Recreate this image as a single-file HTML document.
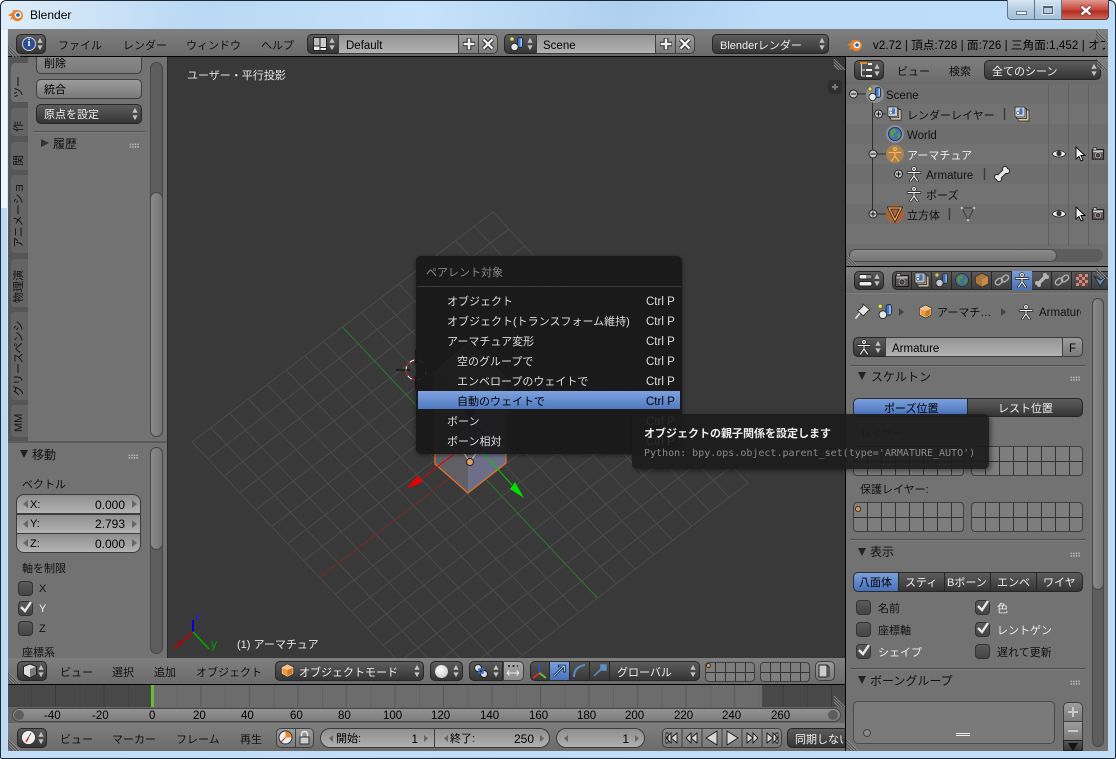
<!DOCTYPE html>
<html><head><meta charset="utf-8"><title>Blender</title>
<style>
html,body{margin:0;padding:0;background:#fff;width:1116px;height:759px;overflow:hidden}
body{position:relative;font-family:"Liberation Sans","Noto Sans CJK JP",sans-serif;font-size:11px;color:#111}
div,svg{position:absolute;box-sizing:border-box}
svg{overflow:visible}
.t{white-space:nowrap;line-height:16px;height:16px;margin-top:1px}
.w{color:#eee}.k{color:#000}
.lat{font-size:11.5px}
.hd{background:linear-gradient(#7f7f7f,#6b6b6b)}
.dk{background:linear-gradient(#5c5c5c,#353535);border:1px solid #262626;border-radius:5px}
.gr{background:linear-gradient(#9c9c9c,#7a7a7a);border:1px solid #3f3f3f;border-radius:5px}
.fd{background:linear-gradient(#949494,#b2b2b2);border:1px solid #3c3c3c}
.bu{background:linear-gradient(#7c9fdc,#4670b8);border:1px solid #2c2c2c}
.bd{background:linear-gradient(#555,#383838);border:1px solid #262626}
.tab{background:#646464;border-radius:4px 0 0 4px;left:11px;width:17px}
.rot{transform-origin:0 0;transform:rotate(-90deg);white-space:nowrap;line-height:15px;height:15px}
.cb{width:15px;height:15px;border-radius:4px;border:1px solid #333;background:linear-gradient(#5a5a5a,#444)}
.trk{background:#5d5d5d;border:1px solid #474747;border-radius:7px}
.th{background:linear-gradient(90deg,#8a8a8a,#757575);border:1px solid #474747;border-radius:7px}
.sep{height:1px;background:#4f4f4f;box-shadow:0 1px 0 #7e7e7e}
.lay{border:1px solid #3f3f3f;border-radius:4px;background-color:#7d7d7d;background-image:linear-gradient(#333,#333),repeating-linear-gradient(90deg,transparent 0 13px,#333 13px 14px);background-size:100% 1px,100% 100%;background-position:0 50%,0 0;background-repeat:no-repeat}
.tri{width:0;height:0;border-left:4px solid transparent;border-right:4px solid transparent;border-top:8px solid #222}
.dots{width:10px;height:5px;background-image:radial-gradient(#bbb 40%,transparent 50%);background-size:2.6px 2.6px}
</style></head><body>
<svg width="0" height="0" style="position:absolute">
<defs>
<symbol id="ud" viewBox="0 0 8 16"><path d="M4 1 7 6.5H1z" fill="#c4c4c4"/><path d="M4 15 7 9.5H1z" fill="#c4c4c4"/></symbol>
<symbol id="man" viewBox="0 0 16 16"><g fill="none" stroke-linecap="round"><g stroke="#222" stroke-width="2.6"><circle cx="8" cy="3" r="1.4"/><path d="M2 6.5H14M8 6.5V10L4.5 15M8 10 11.5 15"/></g><g stroke="#f2f2f2" stroke-width="1.1"><circle cx="8" cy="3" r="1.4"/><path d="M2 6.5H14M8 6.5V10L4.5 15M8 10 11.5 15"/></g></g></symbol>
<symbol id="mano" viewBox="0 0 16 16"><g fill="none" stroke="#ffb050" stroke-width="1.2" stroke-linecap="round"><circle cx="8" cy="3" r="1.4"/><path d="M2 6.5H14M8 6.5V10L4.5 15M8 10 11.5 15"/></g></symbol>
<symbol id="scene" viewBox="0 0 16 16"><rect x="8.5" y="1.500" width="5" height="10" rx="2" fill="#3e76c8" stroke="#16243c" stroke-width=".8"/><rect x="11.500" y="2.500" width="1.500" height="8" fill="#a8c8f0"/><circle cx="5.500" cy="11" r="3.600" fill="#e8e8e8" stroke="#222" stroke-width=".8"/><circle cx="3" cy="3" r="2" fill="#e8e070" stroke="#66662a" stroke-width=".8"/></symbol>
<symbol id="rl" viewBox="0 0 16 16"><rect x="4" y="4" width="11" height="11" fill="#d8c8a0" stroke="#222" stroke-width=".8"/><rect x="2.500" y="2.500" width="10" height="10" fill="#ddd" stroke="#222" stroke-width=".8"/><rect x="1" y="1" width="10" height="10" fill="#c8d0dc" stroke="#222" stroke-width=".8"/><rect x="5.500" y="2.500" width="3" height="6" fill="#3e76c8"/><circle cx="4" cy="7" r="1.600" fill="#fff" stroke="#222" stroke-width=".5"/></symbol>
<symbol id="globe" viewBox="0 0 16 16"><circle cx="8" cy="8" r="6.500" fill="#3f76aa" stroke="#1c2a38" stroke-width=".8"/><path d="M4 4 8 3 9 6 6 8 7 11 5 11 3 8zM10 8 13 7 13 11 11 13z" fill="#5f9a4a"/></symbol>
<symbol id="cube" viewBox="0 0 16 16"><path d="M8 1 14.500 4.500V11.500L8 15 1.500 11.500V4.500z" fill="#f2f2f2" stroke="#332" stroke-width=".8"/><path d="M8 7.500 13.500 4.800V11L8 14z" fill="#d07a22"/><path d="M8 7.500 2.500 4.800V11L8 14z" fill="#ee9a3e"/><path d="M8 2 13 4.500 8 7 3 4.500z" fill="#f8c080"/></symbol>
<symbol id="bone" viewBox="0 0 16 16"><g stroke="#2a2a2a" fill="#2a2a2a"><path d="M4 12 12 4" stroke-width="5.600"/><circle cx="3" cy="11" r="2.600"/><circle cx="5" cy="13" r="2.600"/><circle cx="11" cy="3" r="2.600"/><circle cx="13" cy="5" r="2.600"/></g><g stroke="#e8e8e8" fill="#e8e8e8" stroke-width="0"><path d="M4 12 12 4" stroke-width="3.600" stroke="#e8e8e8"/><circle cx="3" cy="11" r="2"/><circle cx="5" cy="13" r="2"/><circle cx="11" cy="3" r="2"/><circle cx="13" cy="5" r="2"/></g></symbol>
<symbol id="boned" viewBox="0 0 16 16"><g fill="#b4b4b4"><path d="M4 12 12 4" stroke="#b4b4b4" stroke-width="3.400"/><circle cx="3" cy="11" r="2"/><circle cx="5" cy="13" r="2"/><circle cx="11" cy="3" r="2"/><circle cx="13" cy="5" r="2"/></g></symbol>
<symbol id="eye" viewBox="0 0 16 16"><path d="M1 8C4 3.500 12 3.500 15 8 12 12 4 12 1 8z" fill="#eee" stroke="#222" stroke-width=".8"/><circle cx="8" cy="7.500" r="2.600" fill="#333"/></symbol>
<symbol id="cur" viewBox="0 0 16 16"><path d="M4 1V13L7 10.500 9 15 11 14 9 9.500H13z" fill="#eee" stroke="#111"/></symbol>
<symbol id="cam" viewBox="0 0 16 16"><rect x="1.500" y="3.500" width="13" height="11" fill="#5a5a5a" stroke="#111"/><rect x="2.500" y="1.500" width="4" height="2.500" fill="#ddd" stroke="#111" stroke-width=".7"/><rect x="2.500" y="4.500" width="11" height="2" fill="#ccc"/><circle cx="8" cy="10" r="3" fill="#333" stroke="#bbb" stroke-width=".8"/><circle cx="8" cy="10" r="1.100" fill="#b04040"/></symbol>
<symbol id="link" viewBox="0 0 16 16"><g fill="none" stroke="#b0b0b0" stroke-width="1.400"><rect x="1" y="7" width="8" height="5" rx="2.500" transform="rotate(-40 5 9.500)"/><rect x="7" y="4" width="8" height="5" rx="2.500" transform="rotate(-40 11 6.500)"/></g></symbol>
<symbol id="hatch" viewBox="0 0 12 12"><path d="M0 1 11 12M0 4 8 12M0 7 5 12" stroke="#4a4a4a" fill="none"/><path d="M1 1 12 12M1 4 9 12M1 7 6 12" stroke="#9a9a9a" fill="none" stroke-width=".7"/></symbol>
<symbol id="plus" viewBox="0 0 14 14"><path d="M7 1V13M1 7H13" stroke="#222" stroke-width="4.600"/><path d="M7 1.500V12.500M1.500 7H12.500" stroke="#eee" stroke-width="2.600"/></symbol>
<symbol id="xx" viewBox="0 0 14 14"><path d="M2.500 2.500 11.500 11.500M11.500 2.500 2.500 11.500" stroke="#222" stroke-width="4.400"/><path d="M2.500 2.500 11.500 11.500M11.500 2.500 2.500 11.500" stroke="#eee" stroke-width="2.400"/></symbol>
<symbol id="logo" viewBox="0 0 16 16"><path d="M0 8.500 5.500 4.500 4 3.200 9.500 3A5.600 5.600 0 1 1 4.600 11.500L1.800 13.400 3.800 9.300z" fill="#e8822a"/><circle cx="10" cy="8" r="3.300" fill="#fff"/><circle cx="10" cy="8" r="1.900" fill="#2f69a8"/></symbol>
</defs></svg>

<!-- window frame -->
<div style="left:0;top:0;width:1116px;height:759px;border:1px solid #1f2a36;border-radius:6px 6px 2px 2px;background:linear-gradient(100deg,#dfedfa 0,#b9d8f3 16%,#c7e2fa 34%,#aed0ee 50%,#bcdcf8 62%,#bfdefa 100%)"></div>
<div style="left:1px;top:30px;width:6px;height:178px;background:#eef5fb"></div>
<div style="left:1px;top:208px;width:6px;height:548px;background:#bcdaf4"></div>
<div style="left:1px;top:751px;width:1114px;height:6px;background:#c0defa"></div>
<div style="left:1108px;top:30px;width:7px;height:726px;background:#bedcf8"></div>
<div class="t" style="left:30px;top:6px;font-size:12px;color:#000">Blender</div>
<svg style="left:8px;top:7px" width="16" height="16"><use href="#logo"/></svg>
<!-- window controls -->
<div style="left:1007px;top:0;width:28px;height:20px;background:linear-gradient(#d6e6f4,#b6cee2 50%,#a4c0d8);border:1px solid #5f7488;border-top:0;border-radius:0 0 0 4px"></div>
<div style="left:1035px;top:0;width:27px;height:20px;background:linear-gradient(#d6e6f4,#b6cee2 50%,#a4c0d8);border-bottom:1px solid #5f7488;border-right:1px solid #5f7488"></div>
<div style="left:1062px;top:0;width:47px;height:20px;background:linear-gradient(#e09a90,#c8483c 50%,#b02c20 60%,#cc6a58);border:1px solid #5a3a3a;border-top:0;border-left:0;border-radius:0 0 4px 0"></div>
<div style="left:1016px;top:11px;width:11px;height:4px;background:#f0f4f8;border:1px solid #6a7a8a"></div>
<div style="left:1043px;top:6px;width:10px;height:8px;border:1px solid #50606e;box-shadow:inset 0 1px 0 #50606e,0 0 0 1px #dfe8f0"></div>
<svg style="left:1079px;top:5px" width="14" height="11" viewBox="0 0 14 11"><path d="M2 1 12 10M12 1 2 10" stroke="#7a3030" stroke-width="3.600"/><path d="M2.500 1.500 11.500 9.500M11.500 1.500 2.500 9.500" stroke="#fff" stroke-width="2.400"/></svg>

<!-- client -->
<div style="left:8px;top:29px;width:1100px;height:722px;background:#000"></div>

<!-- top header -->
<div class="hd" style="left:8px;top:29px;width:1100px;height:27px"></div>
<svg style="left:8px;top:45px" width="12" height="12"><use href="#hatch"/></svg>
<svg style="left:1096px;top:30px" width="12" height="12"><use href="#hatch"/></svg>
<div class="dk" style="left:16px;top:34px;width:30px;height:20px"></div>
<div style="left:22px;top:37px;width:14px;height:14px;border-radius:50%;background:#2a4d92;border:1px solid #ccd;color:#fff;font:bold 10px/12px 'Liberation Serif',serif;text-align:center">i</div>
<svg style="left:36px;top:37px" width="8" height="14"><use href="#ud"/></svg>
<div class="t" style="left:58px;top:37px">ファイル</div>
<div class="t" style="left:123px;top:37px">レンダー</div>
<div class="t" style="left:186px;top:37px">ウィンドウ</div>
<div class="t" style="left:261px;top:37px">ヘルプ</div>
<div class="dk" style="left:307px;top:34px;width:34px;height:20px;border-radius:5px 0 0 5px"></div>
<svg style="left:313px;top:37px" width="14" height="14" viewBox="0 0 14 14"><path d="M.5 .5H13.500V13.500H.5z" fill="#eee" stroke="#222"/><path d="M7 .5V13.500M.5 9H7M7 10.500H13.500" stroke="#222"/><rect x="1" y="1" width="5.500" height="7.500" fill="#bbb"/><rect x="7.500" y="1" width="5.500" height="9" fill="#ccc"/></svg>
<svg style="left:328px;top:37px" width="8" height="14"><use href="#ud"/></svg>
<div class="fd" style="left:338px;top:34px;width:121px;height:20px"></div>
<div class="t lat k" style="left:346px;top:37px">Default</div>
<div class="gr" style="left:458px;top:34px;width:21px;height:20px;border-radius:0"></div>
<div class="gr" style="left:478px;top:34px;width:20px;height:20px;border-radius:0 5px 5px 0"></div>
<svg style="left:462px;top:37px" width="14" height="14"><use href="#plus"/></svg>
<svg style="left:481px;top:37px" width="14" height="14"><use href="#xx"/></svg>
<div class="dk" style="left:504px;top:34px;width:34px;height:20px;border-radius:5px 0 0 5px"></div>
<svg style="left:509px;top:36px" width="16" height="16"><use href="#scene"/></svg>
<svg style="left:526px;top:37px" width="8" height="14"><use href="#ud"/></svg>
<div class="fd" style="left:536px;top:34px;width:120px;height:20px"></div>
<div class="t lat k" style="left:543px;top:37px">Scene</div>
<div class="gr" style="left:655px;top:34px;width:21px;height:20px;border-radius:0"></div>
<div class="gr" style="left:675px;top:34px;width:20px;height:20px;border-radius:0 5px 5px 0"></div>
<svg style="left:659px;top:37px" width="14" height="14"><use href="#plus"/></svg>
<svg style="left:678px;top:37px" width="14" height="14"><use href="#xx"/></svg>
<div class="dk" style="left:712px;top:34px;width:117px;height:20px"></div>
<div class="t w" style="left:720px;top:37px">Blenderレンダー</div>
<svg style="left:818px;top:37px" width="8" height="14"><use href="#ud"/></svg>
<svg style="left:847px;top:37px" width="16" height="16"><use href="#logo"/></svg>
<div style="left:873px;top:37px;width:232px;height:18px;overflow:hidden"><div class="t k" style="left:0;top:0;letter-spacing:.1px;font-size:11.5px">v2.72 | 頂点:728 | 面:726 | 三角面:1,452 | オブジェクト</div></div>

<!-- left tool panel -->
<div style="left:8px;top:57px;width:20px;height:384px;background:#565656"></div>
<div style="left:28px;top:57px;width:139px;height:384px;background:#727272"></div>
<div class="tab" style="top:63px;height:39px;background:#727272"></div>
<div class="tab" style="top:108px;height:28px"></div>
<div class="tab" style="top:142px;height:28px"></div>
<div class="tab" style="top:175px;height:78px"></div>
<div class="tab" style="top:259px;height:48px"></div>
<div class="tab" style="top:312px;height:88px"></div>
<div class="tab" style="top:405px;height:32px"></div>
<div class="rot" style="left:12px;top:98px">ツー</div>
<div class="rot" style="left:12px;top:132px">作</div>
<div class="rot" style="left:12px;top:166px">関</div>
<div class="rot" style="left:12px;top:248px">アニメーショ</div>
<div class="rot" style="left:12px;top:303px">物理演</div>
<div class="rot" style="left:12px;top:396px">グリースペンシ</div>
<div class="rot" style="left:12px;top:432px">MM</div>
<div class="gr" style="left:36px;top:57px;width:106px;height:17px;border-top:0;border-radius:0 0 5px 5px;background:linear-gradient(#8a8a8a,#7a7a7a)"></div>
<div class="t k" style="left:44px;top:55px">削除</div>
<div class="gr" style="left:36px;top:79px;width:106px;height:20px"></div>
<div class="t k" style="left:44px;top:81px">統合</div>
<div class="dk" style="left:36px;top:104px;width:106px;height:20px"></div>
<div class="t w" style="left:44px;top:106px">原点を設定</div>
<svg style="left:131px;top:107px" width="8" height="14"><use href="#ud"/></svg>
<div class="sep" style="left:33px;top:131px;width:112px"></div>
<div style="left:41px;top:139px;width:0;height:0;border-top:4.500px solid transparent;border-bottom:4.500px solid transparent;border-left:8px solid #333"></div>
<div class="t" style="left:53px;top:135px;font-size:12px">履歴</div>
<div class="dots" style="left:129px;top:143px"></div>
<div class="trk" style="left:150px;top:62px;width:13px;height:375px"></div>
<div class="th" style="left:150px;top:192px;width:13px;height:245px"></div>

<!-- redo panel -->
<div style="left:8px;top:441px;width:159px;height:217px;background:#727272;border-top:2px solid #5a5a5a"></div>
<div class="tri" style="left:20px;top:450px"></div>
<div class="t" style="left:32px;top:446px;font-size:12px">移動</div>
<div class="dots" style="left:128px;top:454px"></div>
<div class="t" style="left:22px;top:476px">ベクトル</div>
<div class="fd" style="left:16px;top:494px;width:125px;height:20px;border-radius:8px 8px 0 0;background:linear-gradient(#8e8e8e,#b4b4b4)"></div>
<div class="fd" style="left:16px;top:514px;width:125px;height:20px;background:linear-gradient(#8e8e8e,#b4b4b4)"></div>
<div class="fd" style="left:16px;top:533px;width:125px;height:20px;border-radius:0 0 8px 8px;background:linear-gradient(#8e8e8e,#b4b4b4)"></div>
<div class="t k" style="left:30px;top:496px">X:</div><div class="t k lat" style="left:94px;width:31px;top:496px;text-align:right;font-size:12px">0.000</div>
<div class="t k" style="left:30px;top:515px">Y:</div><div class="t k lat" style="left:94px;width:31px;top:515px;text-align:right;font-size:12px">2.793</div>
<div class="t k" style="left:30px;top:535px">Z:</div><div class="t k lat" style="left:94px;width:31px;top:535px;text-align:right;font-size:12px">0.000</div>
<svg style="left:22px;top:494px" width="115" height="60" fill="#666"><path d="M1 10 6 6V14zM1 30 6 26V34zM1 49 6 45V53zM110 6 115 10 110 14zM110 26 115 30 110 34zM110 45 115 49 110 53z"/></svg>
<div class="t" style="left:22px;top:560px">軸を制限</div>
<div class="cb" style="left:18px;top:581px"></div><div class="t" style="left:39px;top:580px">X</div>
<div class="cb" style="left:18px;top:601px"></div><div class="t w" style="left:39px;top:600px">Y</div>
<svg style="left:19px;top:600px" width="14" height="14"><path d="M2 7 6 11 12 2" fill="none" stroke="#e8e8e8" stroke-width="2.400"/></svg>
<div class="cb" style="left:18px;top:621px"></div><div class="t" style="left:39px;top:620px">Z</div>
<div class="t" style="left:22px;top:644px">座標系</div>
<div class="trk" style="left:150px;top:447px;width:13px;height:207px"></div>
<div class="th" style="left:150px;top:447px;width:13px;height:103px"></div>

<!-- 3D viewport -->
<div style="left:167px;top:57px;width:678px;height:601px;background:#393939;overflow:hidden;border-left:1px solid #2a2a2a"></div>
<svg style="left:168px;top:57px;overflow:hidden" width="677" height="601" viewBox="168 57 677 601">
<g stroke="#4b4b4b" stroke-width="1" fill="none">
<path d="M192 442L447 713M210.800 427.600L465.800 698.600M229.600 413.250L484.600 684.250M248.400 398.900L503.400 669.900M267.250 384.500L522.250 655.500M286.100 370.100L541.100 641.100M304.900 355.750L559.900 626.750M323.700 341.400L578.700 612.400M361.300 312.600L616.300 583.600M380.100 298.250L635.100 569.250M398.900 283.900L653.900 554.900M417.750 269.500L672.750 540.500M436.600 255.100L691.600 526.100M455.400 240.750L710.400 511.750M474.200 226.400L729.200 497.400M493 212L748 483"/>
<path d="M192 442L493 212M207.900 458.900L508.900 228.900M223.900 475.900L524.900 245.900M239.800 492.800L540.800 262.800M255.750 509.750L556.750 279.750M271.700 526.700L572.700 296.700M287.600 543.600L588.600 313.600M303.600 560.600L604.600 330.600M335.400 594.400L636.400 364.400M351.400 611.400L652.400 381.400M367.300 628.300L668.300 398.300M383.250 645.250L684.250 415.250M399.200 662.200L700.200 432.200M415.100 679.100L716.100 449.100M431.100 696.100L732.100 466.100M447 713L748 483"/>
</g>
<path d="M342.500 327L597.500 598" stroke="#2a7a2a"/>
<path d="M319.500 577.500L620.500 347.500" stroke="#7a2a2a"/>
<path d="M468 343 506 378V463L468 493 435 464V372z" fill="#5f5f64"/>
<path d="M468 400 506 378V463L468 493z" fill="#6d6f88"/>
<path d="M468 343 506 378 468 405 435 372z" fill="#77777c"/>
<path d="M468 343 506 378V463L468 493 435 464V372z" fill="none" stroke="#e87420" stroke-width="1.200"/>
<circle cx="470" cy="412" r="5" fill="#101a48"/>
<circle cx="470" cy="440" r="14" fill="none" stroke="#222"/>
<path d="M470 417V430" stroke="#101a48" stroke-width="2"/>
<path d="M463 452 470 462 477 452" fill="none" stroke="#d8c8a8"/>
<circle cx="470" cy="462" r="3.500" fill="#e0a060" stroke="#222"/>
<path d="M454 454 421 479" stroke="#e00000"/>
<path d="M406 489 417 476 423 482z" fill="#e60000"/>
<path d="M485 455 512 485" stroke="#00c800"/>
<path d="M524 498 515 482 510 489z" fill="#00e000"/>
<circle cx="416" cy="370" r="10" fill="none" stroke="#fff" stroke-dasharray="5 5"/>
<circle cx="416" cy="370" r="10" fill="none" stroke="#d02020" stroke-dasharray="5 5" stroke-dashoffset="5"/>
<path d="M396 370H410M422 370H436M416 350V364M416 376V390" stroke="#000"/>
<path d="M193 632V620" stroke="#0000d8" stroke-width="2"/>
<path d="M193 632 174 649" stroke="#c00000" stroke-width="1.600"/>
<path d="M193 632 209 649" stroke="#00a800" stroke-width="1.600"/>
<text x="195" y="620" font-size="11" fill="#2222cc" font-family="Liberation Sans,sans-serif">z</text>
<text x="176" y="646" font-size="11" fill="#8a1010" font-family="Liberation Sans,sans-serif">x</text>
<text x="211" y="648" font-size="12" fill="#00a000" font-family="Liberation Sans,sans-serif">y</text>
</svg>
<div class="t" style="left:187px;top:67px;color:#e4e4e4">ユーザー・平行投影</div>
<div class="t" style="left:237px;top:636px;color:#e4e4e4">(1) アーマチュア</div>
<div style="left:828px;top:80px;width:14px;height:14px;background:#2e2e2e;border-radius:3px"></div>
<div style="left:832px;top:86px;width:6px;height:2px;background:#777"></div><div style="left:834px;top:84px;width:2px;height:6px;background:#777"></div>
<svg style="left:833px;top:58px" width="12" height="12"><use href="#hatch"/></svg>

<!-- 3D header -->
<div class="hd" style="left:8px;top:658px;width:837px;height:26px"></div>
<svg style="left:8px;top:672px" width="12" height="12"><use href="#hatch"/></svg>
<div class="dk" style="left:17px;top:661px;width:30px;height:20px"></div>
<svg style="left:22px;top:663px" width="16" height="16" viewBox="0 0 16 16"><path d="M8 1 14.500 3.500V11.500L8 15 1.500 11.500V3.500z" fill="#ddd" stroke="#222"/><path d="M8 6 14 3.800V11L8 14.500z" fill="#777"/></svg>
<svg style="left:37px;top:664px" width="8" height="14"><use href="#ud"/></svg>
<div class="t" style="left:60px;top:664px">ビュー</div>
<div class="t" style="left:112px;top:664px">選択</div>
<div class="t" style="left:154px;top:664px">追加</div>
<div class="t" style="left:196px;top:664px">オブジェクト</div>
<div class="dk" style="left:275px;top:661px;width:149px;height:20px"></div>
<svg style="left:280px;top:663px" width="15" height="15"><use href="#cube"/></svg>
<div class="t w" style="left:299px;top:664px">オブジェクトモード</div>
<svg style="left:413px;top:664px" width="8" height="14"><use href="#ud"/></svg>
<div class="dk" style="left:430px;top:661px;width:33px;height:20px"></div>
<div style="left:435px;top:665px;width:13px;height:13px;border-radius:50%;background:radial-gradient(circle at 40% 35%,#fff,#bbb)"></div>
<svg style="left:452px;top:664px" width="8" height="14"><use href="#ud"/></svg>
<div class="dk" style="left:469px;top:661px;width:34px;height:20px;border-radius:5px 0 0 5px"></div>
<svg style="left:473px;top:663px" width="16" height="16" viewBox="0 0 16 16"><circle cx="5" cy="5" r="3.500" fill="#ddd" stroke="#222"/><circle cx="11" cy="11" r="3.500" fill="#ddd" stroke="#222"/><rect x="6" y="6" width="4" height="4" fill="none" stroke="#2a6ed8" stroke-width="1.500"/></svg>
<svg style="left:492px;top:664px" width="8" height="14"><use href="#ud"/></svg>
<div style="left:503px;top:661px;width:21px;height:20px;background:linear-gradient(#a8a8a8,#8c8c8c);border:1px solid #3f3f3f;border-radius:0 5px 5px 0"></div>
<svg style="left:505px;top:663px" width="16" height="16" viewBox="0 0 16 16"><path d="M2 10H14M2 10 4.500 7.500M2 10 4.500 12.500M14 10 11.500 7.500M14 10 11.500 12.500" stroke="#eee" fill="none"/><path d="M3 3H13" stroke="#335" stroke-width="2" stroke-dasharray="2 2.500"/></svg>
<div class="bd" style="left:530px;top:661px;width:20px;height:20px;border-radius:5px 0 0 5px"></div>
<svg style="left:531px;top:663px" width="17" height="17" viewBox="0 0 17 17"><path d="M8.500 10V1" stroke="#2850d8" stroke-width="1.600"/><path d="M8.500 10 2 15" stroke="#d83020" stroke-width="1.800"/><path d="M8.500 10 15 15" stroke="#70c030" stroke-width="1.800"/></svg>
<div class="bu" style="left:549px;top:661px;width:21px;height:20px"></div>
<svg style="left:552px;top:663px" width="15" height="15" viewBox="0 0 15 15"><path d="M2 13 12 3M6 3H12.500V9.500" stroke="#0d2038" fill="none" stroke-width="2.400"/><path d="M2 13 12 3M7 3H12.500V8.500" stroke="#9cc4f0" fill="none" stroke-width="1"/></svg>
<div class="bd" style="left:569px;top:661px;width:21px;height:20px"></div>
<svg style="left:572px;top:663px" width="15" height="15" viewBox="0 0 15 15"><path d="M2 14C2 7 6 3 13 2" fill="none" stroke="#5f8cc4" stroke-width="2"/></svg>
<div class="bd" style="left:589px;top:661px;width:21px;height:20px"></div>
<svg style="left:592px;top:663px" width="15" height="15" viewBox="0 0 15 15"><path d="M2 13 9 6V2H14V7H10" fill="#5f8cc4" stroke="#5f8cc4" stroke-width="1.400"/></svg>
<div class="dk" style="left:609px;top:661px;width:91px;height:20px;border-radius:0 5px 5px 0"></div>
<div class="t w" style="left:617px;top:664px">グローバル</div>
<svg style="left:689px;top:664px" width="8" height="14"><use href="#ud"/></svg>
<div class="lay" style="left:705px;top:662px;width:50px;height:20px;background-image:linear-gradient(#333,#333),repeating-linear-gradient(90deg,transparent 0 9px,#333 9px 10px)"></div>
<div style="left:706px;top:663px;width:5px;height:5px;background:#e89a40;border:1px solid #333;border-radius:50%"></div>
<div class="lay" style="left:760px;top:662px;width:50px;height:20px;background-image:linear-gradient(#333,#333),repeating-linear-gradient(90deg,transparent 0 9px,#333 9px 10px)"></div>
<div class="gr" style="left:815px;top:661px;width:20px;height:20px"></div>
<svg style="left:818px;top:664px" width="14" height="14" viewBox="0 0 14 14"><rect x="1" y="1" width="8" height="12" fill="#ccc" stroke="#222"/><path d="M9 1 11 3V13" stroke="#222" fill="none"/></svg>

<!-- timeline -->
<div style="left:8px;top:685px;width:837px;height:22px;background-color:#6c6c6c;background-image:linear-gradient(90deg,#575757 1px,transparent 1px),linear-gradient(90deg,#626262 1px,transparent 1px);background-size:48.500px 100%,48.500px 100%;background-position:47px 0,23px 0"></div>
<div style="left:8px;top:685px;width:143px;height:22px;background:rgba(0,0,0,.33)"></div>
<div style="left:762px;top:685px;width:83px;height:22px;background:rgba(0,0,0,.33)"></div>
<div style="left:151px;top:685px;width:3px;height:22px;background:#5fc038"></div>
<svg style="left:833px;top:695px" width="12" height="12"><use href="#hatch"/></svg>
<div style="left:8px;top:707px;width:837px;height:16px;background:#656565"></div>
<div style="left:12px;top:708px;width:829px;height:14px;background:linear-gradient(#939393,#7c7c7c);border:1px solid #464646;border-radius:7px"></div>
<div style="left:14px;top:710px;width:10px;height:10px;border-radius:50%;background:#5e5e5e"></div>
<div style="left:828px;top:710px;width:10px;height:10px;border-radius:50%;background:#5e5e5e"></div>
<div class="t k lat" style="left:44px;top:707px">-40</div>
<div class="t k lat" style="left:92px;top:707px">-20</div>
<div class="t k lat" style="left:149px;top:707px">0</div>
<div class="t k lat" style="left:193px;top:707px">20</div>
<div class="t k lat" style="left:241px;top:707px">40</div>
<div class="t k lat" style="left:290px;top:707px">60</div>
<div class="t k lat" style="left:338px;top:707px">80</div>
<div class="t k lat" style="left:383px;top:707px">100</div>
<div class="t k lat" style="left:431px;top:707px">120</div>
<div class="t k lat" style="left:480px;top:707px">140</div>
<div class="t k lat" style="left:529px;top:707px">160</div>
<div class="t k lat" style="left:577px;top:707px">180</div>
<div class="t k lat" style="left:625px;top:707px">200</div>
<div class="t k lat" style="left:674px;top:707px">220</div>
<div class="t k lat" style="left:722px;top:707px">240</div>
<div class="t k lat" style="left:771px;top:707px">260</div>

<!-- timeline header -->
<div class="hd" style="left:8px;top:723px;width:837px;height:28px"></div>
<svg style="left:8px;top:739px" width="12" height="12"><use href="#hatch"/></svg>
<div class="dk" style="left:17px;top:728px;width:30px;height:20px"></div>
<svg style="left:21px;top:730px" width="15" height="15" viewBox="0 0 15 15"><circle cx="7.500" cy="7.500" r="7" fill="#f0f0f0" stroke="#333" stroke-width=".8"/><path d="M7.500 7.500 5 12" stroke="#c82020" stroke-width="1.400"/><path d="M7.500 7.500 10 3" stroke="#666"/></svg>
<svg style="left:37px;top:731px" width="8" height="14"><use href="#ud"/></svg>
<div class="t" style="left:60px;top:731px">ビュー</div>
<div class="t" style="left:112px;top:731px">マーカー</div>
<div class="t" style="left:176px;top:731px">フレーム</div>
<div class="t" style="left:240px;top:731px">再生</div>
<div class="gr" style="left:276px;top:728px;width:20px;height:20px;border-radius:5px 0 0 5px"></div>
<div class="gr" style="left:295px;top:728px;width:19px;height:20px;border-radius:0 5px 5px 0"></div>
<svg style="left:278px;top:730px" width="15" height="15" viewBox="0 0 15 15"><circle cx="7.500" cy="7.500" r="6.500" fill="#eee" stroke="#333"/><path d="M7.500 7.500V1.500A6 6 0 0 1 13.500 7.500z" fill="#e88a20"/><path d="M7.500 7.500 3 12" stroke="#c82020"/></svg>
<svg style="left:298px;top:730px" width="13" height="15" viewBox="0 0 13 15"><path d="M3.500 7V4.500A3 3 0 0 1 9.500 4.500V7" fill="none" stroke="#eee" stroke-width="1.400"/><rect x="2" y="7" width="9" height="7" fill="#ccc" stroke="#333"/></svg>
<div class="fd" style="left:320px;top:728px;width:115px;height:20px;border-radius:10px 0 0 10px;background:linear-gradient(#8e8e8e,#b0b0b0)"></div>
<div class="fd" style="left:434px;top:728px;width:116px;height:20px;border-radius:0 10px 10px 0;background:linear-gradient(#8e8e8e,#b0b0b0)"></div>
<div class="t k" style="left:336px;top:730px">開始:</div><div class="t k lat" style="left:391px;width:27px;top:730px;text-align:right;font-size:12px">1</div>
<div class="t k" style="left:450px;top:730px">終了:</div><div class="t k lat" style="left:500px;width:34px;top:730px;text-align:right;font-size:12px">250</div>
<div class="fd" style="left:556px;top:728px;width:89px;height:20px;border-radius:10px;background:linear-gradient(#8e8e8e,#b0b0b0)"></div>
<div class="t k lat" style="left:599px;width:30px;top:730px;text-align:right;font-size:12px">1</div>
<svg style="left:326px;top:734px" width="312" height="9" fill="#666"><path d="M7 1V8L3 4.500zM98 1V8L102 4.500zM122 1V8L118 4.500zM214 1V8L218 4.500zM242 1V8L238 4.500zM309 1V8L313 4.500z"/></svg>
<div class="gr" style="left:662px;top:728px;width:120px;height:20px;background:linear-gradient(#8c8c8c,#7a7a7a)"></div>
<svg style="left:662px;top:728px" width="120" height="20" viewBox="0 0 120 20"><path d="M20 0V20M40 0V20M60 0V20M80 0V20M100 0V20" stroke="#3f3f3f"/><g fill="#d8d8d8" stroke="#1a1a1a" stroke-width=".9"><path d="M15 5 9 10 15 15zM9 5 4 10 9 15zM4 5H6V15H4z"/><path d="M29 5 24 10 29 15zM35 5 29 10 35 15z"/><path d="M55 3 44 10 55 17z"/><path d="M65 3 76 10 65 17z"/><path d="M85 5 91 10 85 15zM91 5 96 10 91 15z"/><path d="M105 5 111 10 105 15zM111 5 116 10 111 15zM114 5H116V15H114z"/></g></svg>
<div class="dk" style="left:787px;top:728px;width:70px;height:20px;border-radius:5px 0 0 5px"></div>
<div style="left:795px;top:731px;width:48px;height:18px;overflow:hidden"><div class="t w" style="left:0;top:0">同期しない</div></div>

<!-- black separator column -->
<div style="left:845px;top:57px;width:1px;height:694px;background:#000"></div>

<!-- outliner -->
<div class="hd" style="left:846px;top:57px;width:262px;height:27px"></div>
<div class="dk" style="left:854px;top:60px;width:30px;height:20px"></div>
<svg style="left:859px;top:62px" width="15" height="16" viewBox="0 0 15 16"><path d="M1 1H8" stroke="#e88a20" stroke-width="2"/><path d="M2.500 2V14M2.500 8H6M2.500 14H6" stroke="#ddd"/><path d="M7 8H13M7 14H13M9 2H13" stroke="#eee" stroke-width="2"/></svg>
<svg style="left:873px;top:63px" width="8" height="14"><use href="#ud"/></svg>
<div class="t" style="left:897px;top:63px">ビュー</div>
<div class="t" style="left:949px;top:63px">検索</div>
<div class="dk" style="left:984px;top:60px;width:117px;height:20px"></div>
<div class="t w" style="left:992px;top:63px">全てのシーン</div>
<svg style="left:1090px;top:63px" width="8" height="14"><use href="#ud"/></svg>
<svg style="left:1096px;top:58px" width="12" height="12"><use href="#hatch"/></svg>
<div style="left:846px;top:84px;width:262px;height:182px;background:#727272"></div>
<div style="left:846px;top:84px;width:262px;height:182px;background:repeating-linear-gradient(#6e6e6e 0 20px,#727272 20px 40px)"></div>
<div style="left:1048px;top:84px;width:1px;height:162px;background:#606060"></div>
<div style="left:1068px;top:84px;width:1px;height:162px;background:#606060"></div>
<div style="left:1088px;top:84px;width:1px;height:162px;background:#606060"></div>
<svg style="left:846px;top:84px" width="262" height="182" viewBox="846 84 262 182">
<path d="M853 94H868M872.500 98V214M873 154H886M873 214H886M879 114H886" stroke="#2e2e2e" fill="none"/>
<g fill="#c4c4c4" stroke="#222"><circle cx="853.500" cy="94" r="4"/><circle cx="878.500" cy="114" r="4"/><circle cx="873" cy="154" r="4"/><circle cx="898.500" cy="174" r="4"/><circle cx="873" cy="214" r="4"/></g>
<path d="M851 94H856M870.500 154H875.500M870.500 214H875.500M876 114H881M896 174H901M873 211.500V216.500M878.500 111.500V116.500M898.500 171.500V176.500" stroke="#111" fill="none"/>
<circle cx="875" cy="94" r="9" fill="#8e8e8e"/><circle cx="1022" cy="114" r="9" fill="#7f7f7f"/>
<circle cx="895" cy="134" r="9" fill="#8a8ca0"/>
<circle cx="895" cy="154" r="9" fill="#ab8250"/>
<circle cx="895" cy="214" r="9" fill="#a9633a"/>
<path d="M889 208H901L895 220z" fill="none" stroke="#1c1c1c" stroke-width="2.800"/><path d="M889 208H901L895 220z" fill="none" stroke="#f0a850" stroke-width="1.300"/>
<path d="M962 208H974L968 220z" fill="none" stroke="#444" stroke-width="1.300"/><g fill="#bbb"><circle cx="962" cy="208" r="1.300"/><circle cx="974" cy="208" r="1.300"/><circle cx="968" cy="220" r="1.300"/></g>
<path d="M1004.500 108V120M984.500 168V180M949.500 208V220" stroke="#3a3a3a" stroke-width="1.500"/>
<use href="#scene" x="867" y="86" width="16" height="16"/>
<use href="#rl" x="887" y="106" width="15" height="15"/>
<use href="#rl" x="1014" y="106" width="16" height="16"/>
<use href="#globe" x="887" y="126" width="16" height="16"/>
<use href="#mano" x="887" y="146" width="16" height="16"/>
<use href="#man" x="906" y="166" width="16" height="16"/>
<use href="#bone" x="994" y="166" width="16" height="16"/>
<use href="#man" x="906" y="186" width="16" height="16"/>
<use href="#eye" x="1051" y="146" width="16" height="16"/><use href="#cur" x="1072" y="146" width="16" height="16"/><use href="#cam" x="1091" y="146" width="14" height="15"/>
<use href="#eye" x="1051" y="206" width="16" height="16"/><use href="#cur" x="1072" y="206" width="16" height="16"/><use href="#cam" x="1091" y="206" width="14" height="15"/>
</svg>
<div class="t lat" style="left:886px;top:87px">Scene</div>
<div class="t" style="left:907px;top:107px">レンダーレイヤー</div>
<div class="t lat" style="left:907px;top:127px">World</div>
<div class="t w" style="left:907px;top:147px">アーマチュア</div>
<div class="t lat" style="left:926px;top:167px">Armature</div>
<div class="t" style="left:926px;top:187px">ポーズ</div>
<div class="t" style="left:907px;top:207px">立方体</div>
<div style="left:849px;top:249px;width:254px;height:13px;background:#5d5d5d;border-radius:7px"></div>
<div style="left:849px;top:249px;width:208px;height:13px;background:linear-gradient(#8a8a8a,#757575);border:1px solid #4a4a4a;border-radius:7px"></div>
<svg style="left:846px;top:254px" width="12" height="12"><use href="#hatch"/></svg>
<div style="left:846px;top:266px;width:262px;height:1px;background:#000"></div>

<!-- properties header -->
<div class="hd" style="left:846px;top:267px;width:262px;height:26px"></div>
<div class="dk" style="left:854px;top:271px;width:30px;height:19px"></div>
<svg style="left:858px;top:273px" width="15" height="15" viewBox="0 0 15 15"><rect x="1" y="1.500" width="13" height="4.500" rx="2" fill="#eee" stroke="#222"/><rect x="1" y="8.500" width="13" height="4.500" rx="2" fill="#eee" stroke="#222"/><rect x="8" y="2" width="5.500" height="3.500" fill="#888"/></svg>
<svg style="left:873px;top:273px" width="8" height="14"><use href="#ud"/></svg>
<div style="left:892px;top:271px;width:216px;height:19px;background:linear-gradient(#5a5a5a,#3e3e3e);border:1px solid #262626;border-right:0;border-radius:5px 0 0 5px"></div>
<div style="left:911px;top:271px;width:1px;height:19px;background:#262626"></div>
<div style="left:931px;top:271px;width:1px;height:19px;background:#262626"></div>
<div style="left:951px;top:271px;width:1px;height:19px;background:#262626"></div>
<div style="left:971px;top:271px;width:1px;height:19px;background:#262626"></div>
<div style="left:991px;top:271px;width:1px;height:19px;background:#262626"></div>
<div style="left:1011px;top:271px;width:1px;height:19px;background:#262626"></div>
<div class="bu" style="left:1012px;top:271px;width:20px;height:19px;border-width:0"></div>
<div style="left:1051px;top:271px;width:1px;height:19px;background:#262626"></div>
<div style="left:1071px;top:271px;width:1px;height:19px;background:#262626"></div>
<div style="left:1091px;top:271px;width:1px;height:19px;background:#262626"></div>
<svg style="left:894px;top:272px" width="16" height="16" opacity=".8"><use href="#cam"/></svg>
<svg style="left:914px;top:272px" width="16" height="16" opacity=".85"><use href="#rl"/></svg>
<svg style="left:934px;top:272px" width="16" height="16" opacity=".8"><use href="#scene"/></svg>
<svg style="left:954px;top:272px" width="16" height="16" opacity=".8"><use href="#globe"/></svg>
<svg style="left:974px;top:272px" width="16" height="16" viewBox="0 0 16 16"><path d="M8 1 14.500 4.500V11.500L8 15 1.500 11.500V4.500z" fill="#a87840" stroke="#333" stroke-width=".8"/><path d="M8 7.500 14 4.500V11.500L8 14.500z" fill="#c88c48"/></svg>
<svg style="left:994px;top:272px" width="16" height="16"><use href="#link"/></svg>
<svg style="left:1014px;top:272px" width="16" height="16"><use href="#man"/></svg>
<svg style="left:1034px;top:272px" width="16" height="16"><use href="#boned"/></svg>
<svg style="left:1054px;top:272px" width="16" height="16"><use href="#link"/></svg>
<svg style="left:1074px;top:272px" width="16" height="16" viewBox="0 0 16 16"><rect x="1.500" y="1.500" width="13" height="13" fill="#a89890" stroke="#333" stroke-width=".7"/><path d="M2 2H5V5H2zM8 2H11V5H8zM5 5H8V8H5zM11 5H14V8H11zM2 8H5V11H2zM8 8H11V11H8zM5 11H8V14H5zM11 11H14V14H11z" fill="#8a3a30"/></svg>
<svg style="left:1093px;top:274px" width="15" height="14" viewBox="0 0 15 14"><path d="M1 2 7 12 14 2 7 6z" fill="#6c8ab4" stroke="#1e2a3a"/></svg>
<svg style="left:1096px;top:267px" width="12" height="12"><use href="#hatch"/></svg>
<div style="left:846px;top:293px;width:262px;height:458px;background:#727272;border-top:1px solid #7e7e7e"></div>

<!-- properties body -->
<svg style="left:854px;top:303px" width="17" height="17" viewBox="0 0 17 17"><path d="M1.500 15.500 6 10" stroke="#eee" stroke-width="1.400"/><path d="M9 1 16 7 14 8 10.500 11.500 9.500 13 3.500 7.500 5.500 6.500 9 3z" fill="#e8e8e8" stroke="#222" stroke-width=".8"/></svg>
<svg style="left:877px;top:303px" width="17" height="17"><use href="#scene"/></svg>
<svg style="left:899px;top:308px" width="5" height="8"><path d="M0 0 5 4 0 8z" fill="#3f3f3f"/></svg>
<svg style="left:918px;top:304px" width="15" height="15"><use href="#cube"/></svg>
<div class="t" style="left:937px;top:304px">アーマチ…</div>
<svg style="left:1001px;top:308px" width="5" height="8"><path d="M0 0 5 4 0 8z" fill="#3f3f3f"/></svg>
<svg style="left:1018px;top:304px" width="16" height="16"><use href="#man"/></svg>
<div class="t lat" style="left:1039px;top:304px;width:42px;overflow:hidden">Armature</div>
<div class="dk" style="left:853px;top:337px;width:33px;height:20px;border-radius:5px 0 0 5px"></div>
<svg style="left:856px;top:339px" width="16" height="16"><use href="#man"/></svg>
<svg style="left:874px;top:340px" width="8" height="14"><use href="#ud"/></svg>
<div class="fd" style="left:885px;top:337px;width:178px;height:20px"></div>
<div class="t lat k" style="left:892px;top:340px">Armature</div>
<div class="gr" style="left:1062px;top:337px;width:21px;height:20px;border-radius:0 5px 5px 0"></div>
<div class="t k lat" style="left:1069px;top:340px">F</div>
<div class="sep" style="left:850px;top:365px;width:236px"></div>
<div class="tri" style="left:858px;top:372px"></div>
<div class="t" style="left:871px;top:368px;font-size:12px">スケルトン</div>
<div class="dots" style="left:1070px;top:376px"></div>
<div class="bu" style="left:853px;top:398px;width:115px;height:19px;border-radius:5px 0 0 5px"></div>
<div class="t k" style="left:884px;top:400px">ポーズ位置</div>
<div class="dk" style="left:967px;top:398px;width:116px;height:19px;border-radius:0 5px 5px 0"></div>
<div class="t w" style="left:998px;top:400px">レスト位置</div>
<div class="t" style="left:860px;top:425px">レイヤー:</div>
<div class="lay" style="left:853px;top:446px;width:111px;height:30px"></div>
<div class="lay" style="left:971px;top:446px;width:112px;height:30px"></div>
<div class="t" style="left:860px;top:481px">保護レイヤー:</div>
<div class="lay" style="left:853px;top:502px;width:111px;height:30px"></div>
<div class="lay" style="left:971px;top:502px;width:112px;height:30px"></div>
<div style="left:855px;top:506px;width:6px;height:6px;background:#e89a40;border:1px solid #333;border-radius:50%"></div>
<div class="sep" style="left:850px;top:539px;width:236px"></div>
<div class="tri" style="left:858px;top:548px"></div>
<div class="t" style="left:870px;top:543px;font-size:12px">表示</div>
<div class="dots" style="left:1070px;top:552px"></div>
<div class="bu" style="left:853px;top:572px;width:46px;height:20px;border-radius:5px 0 0 5px"></div>
<div class="t k" style="left:859px;top:574px">八面体</div>
<div class="dk" style="left:898px;top:572px;width:47px;height:20px;border-radius:0"></div>
<div class="t w" style="left:905px;top:574px">スティ</div>
<div class="dk" style="left:944px;top:572px;width:47px;height:20px;border-radius:0"></div>
<div class="t w" style="left:947px;top:574px">Bボーン</div>
<div class="dk" style="left:990px;top:572px;width:47px;height:20px;border-radius:0"></div>
<div class="t w" style="left:997px;top:574px">エンベ</div>
<div class="dk" style="left:1036px;top:572px;width:47px;height:20px;border-radius:0 5px 5px 0"></div>
<div class="t w" style="left:1043px;top:574px">ワイヤ</div>
<div class="cb" style="left:856px;top:600px"></div><div class="t" style="left:878px;top:600px">名前</div>
<div class="cb" style="left:856px;top:622px"></div><div class="t" style="left:878px;top:622px">座標軸</div>
<div class="cb" style="left:856px;top:644px"></div><div class="t w" style="left:878px;top:644px">シェイプ</div>
<svg style="left:857px;top:643px" width="14" height="14"><path d="M2 7 6 11 12 2" fill="none" stroke="#e8e8e8" stroke-width="2.400"/></svg>
<div class="cb" style="left:975px;top:600px"></div><div class="t w" style="left:997px;top:600px">色</div>
<svg style="left:976px;top:599px" width="14" height="14"><path d="M2 7 6 11 12 2" fill="none" stroke="#e8e8e8" stroke-width="2.400"/></svg>
<div class="cb" style="left:975px;top:622px"></div><div class="t w" style="left:997px;top:622px">レントゲン</div>
<svg style="left:976px;top:621px" width="14" height="14"><path d="M2 7 6 11 12 2" fill="none" stroke="#e8e8e8" stroke-width="2.400"/></svg>
<div class="cb" style="left:975px;top:644px"></div><div class="t" style="left:997px;top:644px">遅れて更新</div>
<div class="sep" style="left:850px;top:668px;width:236px"></div>
<div class="tri" style="left:858px;top:676px"></div>
<div class="t" style="left:870px;top:672px;font-size:12px">ボーングループ</div>
<div class="dots" style="left:1070px;top:680px"></div>
<div style="left:853px;top:701px;width:202px;height:43px;background:#7a7a7a;border:1px solid #4a4a4a;border-radius:5px"></div>
<div style="left:863px;top:729px;width:8px;height:8px;border:1px solid #444;border-radius:50%;background:#8a8a8a"></div>
<div style="left:956px;top:733px;width:14px;height:1px;background:#eee"></div>
<div style="left:956px;top:735px;width:14px;height:1px;background:#eee"></div>
<div class="gr" style="left:1063px;top:702px;width:20px;height:20px;border-radius:5px 5px 0 0"></div>
<div class="gr" style="left:1063px;top:721px;width:20px;height:20px;border-radius:0"></div>
<div class="bd" style="left:1063px;top:740px;width:20px;height:11px"></div>
<svg style="left:1067px;top:706px" width="12" height="12"><path d="M6 1V11M1 6H11" stroke="#c8c8c8" stroke-width="2"/></svg>
<div style="left:1068px;top:730px;width:10px;height:2px;background:#c8c8c8"></div>
<svg style="left:1068px;top:743px" width="10" height="8"><path d="M0 0H10L5 8z" fill="#111"/></svg>
<div class="trk" style="left:1092px;top:298px;width:12px;height:449px"></div>
<div class="th" style="left:1092px;top:298px;width:12px;height:292px"></div>
<svg style="left:846px;top:739px" width="12" height="12"><use href="#hatch"/></svg>

<!-- popup menu -->
<div style="left:416px;top:256px;width:266px;height:198px;background:rgba(24,24,24,.93);border-radius:5px;box-shadow:0 1px 4px rgba(0,0,0,.5)"></div>
<div class="t" style="left:426px;top:264px;color:#878787">ペアレント対象</div>
<div style="left:417px;top:286px;width:264px;height:1px;background:#3e3e3e"></div>
<div style="left:418px;top:391px;width:262px;height:18px;background:linear-gradient(#7ea2e0,#4f79bf)"></div>
<div class="t" style="left:447px;top:293px;color:#ddd">オブジェクト</div>
<div class="t" style="left:447px;top:313px;color:#ddd">オブジェクト(トランスフォーム維持)</div>
<div class="t" style="left:447px;top:333px;color:#ddd">アーマチュア変形</div>
<div class="t" style="left:457px;top:353px;color:#ddd">空のグループで</div>
<div class="t" style="left:457px;top:373px;color:#ddd">エンベロープのウェイトで</div>
<div class="t k" style="left:457px;top:393px">自動のウェイトで</div>
<div class="t" style="left:447px;top:413px;color:#ddd">ボーン</div>
<div class="t" style="left:447px;top:433px;color:#ddd">ボーン相対</div>
<div class="t lat" style="left:646px;top:293px;color:#ddd">Ctrl P</div>
<div class="t lat" style="left:646px;top:313px;color:#ddd">Ctrl P</div>
<div class="t lat" style="left:646px;top:333px;color:#ddd">Ctrl P</div>
<div class="t lat" style="left:646px;top:353px;color:#ddd">Ctrl P</div>
<div class="t lat" style="left:646px;top:373px;color:#ddd">Ctrl P</div>
<div class="t lat k" style="left:646px;top:393px">Ctrl P</div>
<div class="t lat" style="left:646px;top:413px;color:#ddd">Ctrl P</div>
<div class="t lat" style="left:646px;top:433px;color:#ddd">Ctrl P</div>

<!-- tooltip -->
<div style="left:632px;top:414px;width:357px;height:55px;background:rgba(28,28,28,.93);border-radius:5px;box-shadow:2px 2px 5px rgba(0,0,0,.45)"></div>
<div class="t" style="left:644px;top:425px;color:#eee;font-weight:bold">オブジェクトの親子関係を設定します</div>
<div class="t" style="left:644px;top:445px;color:#8a8a8a;font-family:'DejaVu Sans Mono',monospace;font-size:10px">Python: bpy.ops.object.parent_set(type='ARMATURE_AUTO')</div>
</body></html>
